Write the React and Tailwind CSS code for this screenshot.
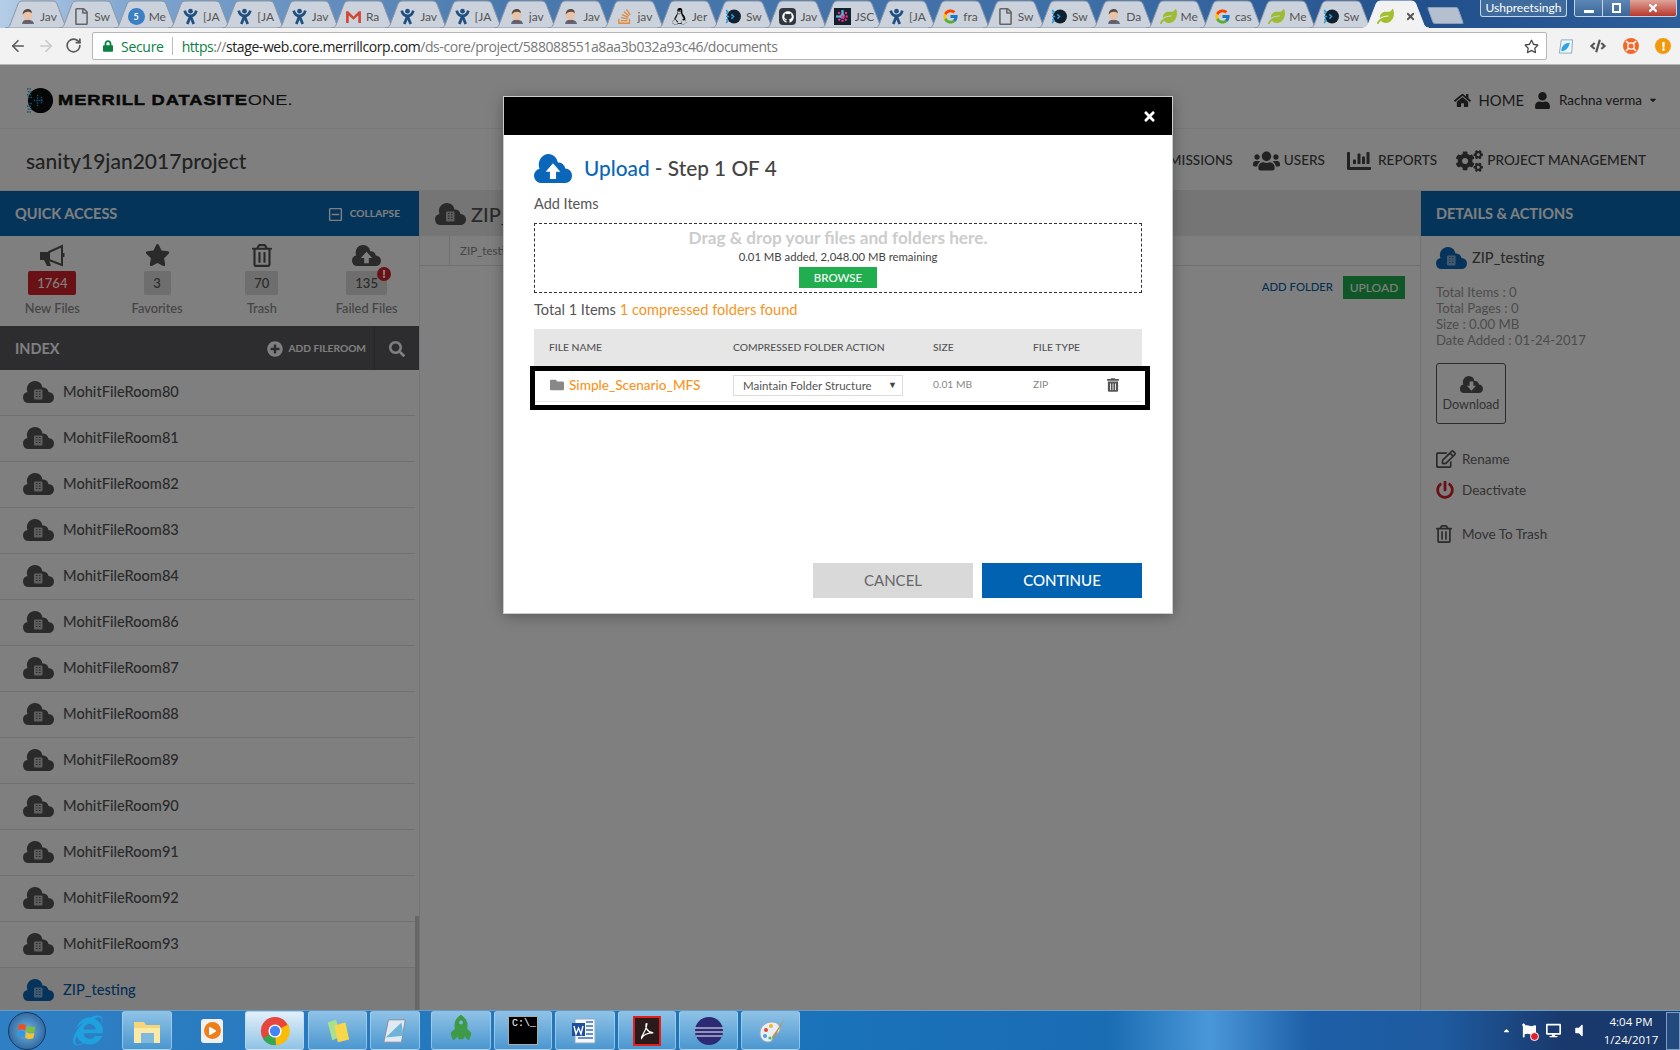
import React from "react";
import {
  FaHome, FaUser, FaUsers, FaCogs, FaStar, FaRegTrashAlt, FaFolder, FaTrashAlt,
  FaSearch, FaPlusCircle, FaRegEdit, FaPowerOff, FaChartBar,
  FaLock, FaRegStar, FaLinux, FaGithub, FaStackOverflow, FaRegFile, FaLeaf,
  FaCaretDown, FaInternetExplorer, FaPlay, FaRocket, FaTimes, FaRegMinusSquare, FaCaretUp, FaFlag, FaVolumeOff, FaDesktop, FaCode, FaExclamation
} from "react-icons/fa";
import { FcGoogle } from "react-icons/fc";
import { ArrowLeft, ArrowRight, RotateCw } from "lucide-react";

const tabs = [
  ["jenkins", "Jav"], ["doc", "Sw"], ["chat", "Me"], ["jira", "[JA"], ["jira", "[JA"], ["jira", "Jav"], ["gmail", "Ra"],
  ["jira", "Jav"], ["jira", "[JA"], ["jenkins", "jav"], ["jenkins", "Jav"], ["so", "jav"], ["linux", "Jer"], ["swagger", "Sw"],
  ["github", "Jav"], ["jsc", "JSC"], ["jira", "[JA"], ["google", "fra"], ["doc", "Sw"], ["swagger", "Sw"], ["jenkins", "Da"],
  ["leaf", "Me"], ["google", "cas"], ["leaf", "Me"], ["swagger", "Sw"],
];

function Fav({ type }) {
  const c = "w-[17px] h-[17px] shrink-0";
  if (type === "jenkins")
    return (
      <svg viewBox="0 0 16 16" className={c}>
        <path d="M3 15c0-3 2-4 5-4s6 1 6 4z" fill="#5b6a78" />
        <circle cx="8" cy="6.500" r="4.500" fill="#e8c3a8" />
        <path d="M3.500 6c0-4 3-5 5-5s4 1.500 3.500 4C10 3 6 3 3.500 6z" fill="#5a4a42" />
        <path d="M6 12l2 1 2-1v2l-2-1-2 1z" fill="#c62828" />
      </svg>
    );
  if (type === "doc") return <FaRegFile className={c + " text-[#666]"} />;
  if (type === "chat")
    return (
      <span className="w-[17px] h-[17px] shrink-0 rounded-full bg-[#3b7fc4] text-white text-[9px] leading-[17px] text-center font-bold">5</span>
    );
  if (type === "jira")
    return (
      <svg viewBox="0 0 16 16" className={c} fill="none" stroke="#205081" strokeWidth="2.600">
        <circle cx="8" cy="3" r="2.200" fill="#205081" stroke="none" />
        <path d="M2.500 2.500C3.500 6 5.500 7.500 8 7.500S12.500 6 13.500 2.500" />
        <path d="M8 7.500L5 15M8 7.500L11 15" />
      </svg>
    );
  if (type === "gmail")
    return (
      <svg viewBox="0 0 16 16" className={c}>
        <path d="M1 3h2l5 5 5-5h2v11h-2.500V7L8 11 3.500 7v7H1z" fill="#d14836" />
      </svg>
    );
  if (type === "so") return <FaStackOverflow className={c + " text-[#e08a3c]"} />;
  if (type === "linux") return <FaLinux className={c + " text-black"} />;
  if (type === "swagger")
    return (
      <svg viewBox="0 0 16 16" className={c}>
        <circle cx="8.500" cy="8" r="6.500" fill="#10202e" />
        <path d="M1 2l2 2M1 5h2M1 8h3M1 11h2M1 14l2-2M6 6l2 2-2 2" stroke="#2d9cdb" strokeWidth="1.500" fill="none" />
      </svg>
    );
  if (type === "github")
    return (
      <span className="w-[17px] h-[17px] shrink-0 rounded-sm bg-[#32383f] text-white flex items-center justify-center">
        <FaGithub className="w-3 h-3" />
      </span>
    );
  if (type === "jsc")
    return (
      <svg viewBox="0 0 16 16" className={c}>
        <rect width="16" height="16" fill="#14202c" />
        <path d="M8 2v12M2 8h12M4 4l8 8M12 4l-8 8" stroke="#ec3a8c" strokeWidth="2" strokeDasharray="2 1" />
        <path d="M8 2v5M2 8h5" stroke="#35c6e8" strokeWidth="2" />
      </svg>
    );
  if (type === "google") return <FcGoogle className={c} />;
  return <FaLeaf className={c + " text-[#9dbb35]"} />;
}

function TabShape({ fill, stroke }) {
  return (
    <svg viewBox="0 0 65 28" preserveAspectRatio="none" className="absolute inset-0 w-full h-full">
      <path d="M0 28 C3 28 4 27 5 25 L13 4 C14 2 15 1 18 1 L47 1 C50 1 51 2 52 4 L60 25 C61 27 62 28 65 28 Z" fill={fill} stroke={stroke} />
    </svg>
  );
}

function ChromeTabs() {
  return (
    <div className="h-[28px] flex items-stretch pl-[5px] bg-[linear-gradient(90deg,#b5cde6_0%,#7fa5cf_8%,#4a79ae_30%,#3e6ea6_65%,#21508c_85%,#2c5e9a_100%)] relative overflow-hidden">
      {tabs.map(([t, l], i) => (
        <div key={i} className="relative w-[65px] h-[28px] mr-[-10.700px] shrink-0">
          <TabShape fill="#ccd2db" stroke="#8797aa" />
          <div className="relative flex items-center gap-[4px] pl-[14px] pt-[5px] h-full">
            <Fav type={t} />
            <span className="text-[12px] text-[#555] w-[20px] overflow-hidden whitespace-nowrap">{l}</span>
          </div>
        </div>
      ))}
      <div className="relative w-[66px] h-[28px] shrink-0 z-10">
        <TabShape fill="#f2f2f2" stroke="#f2f2f2" />
        <div className="relative flex items-center pl-[14px] pt-[5px] h-full">
          <FaLeaf className="w-[17px] h-[17px] text-[#a3bf30]" />
          <FaTimes className="ml-[11px] w-[11px] h-[11px] text-[#555]" />
        </div>
      </div>
      <div className="relative w-[31px] h-[17px] mt-[7px] ml-[1px] shrink-0 bg-[#b4c0cf] skew-x-[20deg] rounded-[2px] border border-[#8aa0ba]" />
      <div className="ml-auto mr-[3px] flex items-start gap-[7px]">
        <div className="w-[87px] h-[17px] bg-[#3f6b9d] border border-[#c5d3e3] border-t-0 rounded-b-[3px] text-white text-[12px] leading-[16px] text-center whitespace-nowrap overflow-hidden">
          Ushpreetsingh
        </div>
        <div className="w-[103px] h-[17px] border border-[#c5d3e3] border-t-0 rounded-b-[3px] flex overflow-hidden text-white">
          <div className="w-[28px] border-r border-[#c5d3e3] bg-[linear-gradient(#5b86b5,#3b6698)] flex items-end justify-center pb-[3px]"><div className="w-[10px] h-[3px] bg-white" /></div>
          <div className="w-[27px] bg-[linear-gradient(#5b86b5,#3b6698)] flex items-center justify-center"><div className="w-[9px] h-[10px] border-2 border-white" /></div>
          <div className="flex-1 bg-[linear-gradient(#e0a49a,#b8372b)] flex items-center justify-center"><FaTimes className="w-[12px] h-[12px]" /></div>
        </div>
      </div>
    </div>
  );
}

function Toolbar() {
  return (
    <div className="h-[37px] bg-[#f2f2f2] flex items-center relative border-b border-[#b8b8b8]">
      <ArrowLeft strokeWidth={2.200} className="absolute left-[9px] top-[9px] w-[18px] h-[18px] text-[#5a5a5a]" />
      <ArrowRight strokeWidth={2.200} className="absolute left-[37px] top-[9px] w-[18px] h-[18px] text-[#c9c9c9]" />
      <RotateCw strokeWidth={2.400} className="absolute left-[65px] top-[9px] w-[17px] h-[17px] text-[#5a5a5a]" />
      <div className="ml-[92px] w-[1455px] h-[28px] bg-white border border-[#b5b5b5] rounded-[2px] flex items-center pl-[10px] text-[14px] font-['Open_Sans',sans-serif]">
        <FaLock className="w-[10px] h-[12px] text-[#0b8043]" />
        <span className="ml-[8px] text-[#0b8043] tracking-[-0.300px]">Secure</span>
        <span className="ml-[8px] w-px h-[18px] bg-[#bbb]" />
        <span className="ml-[9px] tracking-[-0.420px] whitespace-nowrap">
          <span className="text-[#0b8043]">https</span>
          <span className="text-[#777]">://</span>
          <span className="text-[#222]">stage-web.core.merrillcorp.com</span>
          <span className="text-[#777]">/ds-core/project/588088551a8aa3b032a93c46/documents</span>
        </span>
        <FaRegStar className="ml-auto mr-[7px] w-[15px] h-[15px] text-[#444]" />
      </div>
      <svg viewBox="0 0 16 18" className="ml-[11px] w-[16px] h-[17px]">
        <path d="M3 2h12l-1 14H1z" fill="#eef6fb" stroke="#8ab" />
        <path d="M3 14c0-6 4-9 9-9-1 5-4 9-9 9z" fill="#2ea4e0" />
      </svg>
      <FaCode className="ml-[16px] w-[16px] h-[16px] text-[#555]" />
      <svg viewBox="0 0 16 16" className="ml-[17px] w-[16px] h-[16px]">
        <circle cx="8" cy="8" r="8" fill="#f2682a" />
        <circle cx="8" cy="8" r="3.200" fill="#f2682a" stroke="#fff" strokeWidth="1.200" />
        <path d="M3 3l2.500 2.500M13 3l-2.500 2.500M3 13l2.500-2.500M13 13l-2.500-2.500" stroke="#fff" strokeWidth="1.600" />
      </svg>
      <div className="ml-[16px] w-[16px] h-[16px] rounded-full bg-[#f39a0c] flex items-center justify-center">
        <FaExclamation className="w-[9px] h-[9px] text-white" />
      </div>
    </div>
  );
}

const cloudPath = "M5.500 22A5.500 5.500 0 0 1 4.500 11.100A8 8 0 0 1 12 0A8 8 0 0 1 19.500 6.500A5.500 5.500 0 0 1 25.500 11A5.500 5.500 0 0 1 25.500 22Z";

function Cloud({ w, h, color, children }) {
  return (
    <svg viewBox="0 0 31 22" width={w} height={h} preserveAspectRatio="none" className="shrink-0" fill={color}>
      <path d={cloudPath} />
      {children}
    </svg>
  );
}

function BuildingCloud({ blue, w = 30 }) {
  const rect = blue ? "#8cb5da" : "#bcbcbc";
  const dot = blue ? "#0a66b8" : "#555";
  return (
    <Cloud w={w} h={Math.round((w * 22) / 31)} color={blue ? "#0a66b8" : "#555"}>
      <rect x="11" y="8.500" width="8.500" height="10" rx="1" fill={rect} />
      <path d="M13 10.500h1.500M16 10.500h1.500M13 13h1.500M16 13h1.500M13 15.500h1.500M16 15.500h1.500" stroke={dot} strokeWidth="1" />
    </Cloud>
  );
}

function UpCloud({ w, h, color }) {
  return (
    <Cloud w={w} h={h} color={color}>
      <path d="M15.500 7l6 6.500h-3.500V19h-5v-5.500H9.500z" fill="#fff" />
    </Cloud>
  );
}

function Header() {
  return (
    <>
      <div className="h-[64px] pt-[7px] flex items-center border-b border-[#f0f0f0] relative">
        <div className="ml-[25px] flex items-center">
          <svg viewBox="0 0 30 30" className="w-[29px] h-[29px]">
            <circle cx="16" cy="15" r="13" fill="#0c0c0c" />
            <path d="M2 3h4M3 6h4M2 9h5M3 12h5M9 15h10M3 18h5M2 21h5M3 24h4M2 27h4M13 9v12M17 11v8" stroke="#2b9fd0" strokeWidth="1.600" strokeDasharray="1.600 1" />
          </svg>
          <span className="ml-[4px] inline-block origin-left scale-x-[1.180] text-[15.500px] font-bold font-['Liberation_Sans',sans-serif] tracking-[0.800px] text-[#111] whitespace-nowrap [-webkit-text-stroke:0.500px_#111]">
            MERRILL DATASITE<span className="font-normal tracking-normal text-[#222] [-webkit-text-stroke:0px]">ONE.</span>
          </span>
        </div>
        <div className="ml-auto flex items-center text-[#333]">
          <FaHome className="w-[17px] h-[17px]" />
          <span className="ml-[8px] text-[14.800px]">HOME</span>
          <FaUser className="ml-[11px] w-[15px] h-[17px]" />
          <span className="ml-[9px] text-[13.500px]">Rachna verma</span>
          <FaCaretDown className="ml-[6px] mr-[22px] w-[10px] h-[10px]" />
        </div>
      </div>
      <div className="h-[62px] pt-[2px] flex items-center border-b border-[#ececec]">
        <span className="ml-[26px] text-[21px] font-medium text-[#444]">sanity19jan2017project</span>
        <div className="ml-auto mr-[34px] flex items-center text-[13.600px] font-medium text-[#444] whitespace-nowrap">
          <span>PERMISSIONS</span>
          <FaUsers className="ml-[20px] w-[27px] h-[24px]" />
          <span className="ml-[4px]">USERS</span>
          <FaChartBar className="ml-[20px] w-[28px] h-[24px]" />
          <span className="ml-[5px]">REPORTS</span>
          <FaCogs className="ml-[19px] w-[27px] h-[24px]" />
          <span className="ml-[4px]">PROJECT MANAGEMENT</span>
        </div>
      </div>
    </>
  );
}

const rooms = ["80", "81", "82", "83", "84", "86", "87", "88", "89", "90", "91", "92", "93"];

function QuickItem({ icon, count, label, red, alert }) {
  return (
    <div className="flex-1 flex flex-col items-center">
      <div className="h-[24px] flex items-center text-[#555]">{icon}</div>
      <div className={"relative mt-[4px] h-[24px] min-w-[27px] rounded-[2px] text-[13px] font-medium leading-[24px] text-center " + (red ? "px-[9px] bg-[#d2222a] text-white" : "px-[9px] bg-[#dcdcdc] text-[#555]")}>
        {count}
        {alert && (
          <span className="absolute right-[-4px] top-[-4px] w-[14px] h-[14px] rounded-full bg-[#d2222a] text-white flex items-center justify-center">
            <FaExclamation className="w-[8px] h-[8px]" />
          </span>
        )}
      </div>
      <div className="mt-[4px] text-[12.800px] font-medium text-[#888]">{label}</div>
    </div>
  );
}

function Sidebar() {
  return (
    <div className="w-[419px] shrink-0 flex flex-col relative">
      <div className="h-[45px] pt-[1px] bg-[#0a69b7] flex items-center px-[15px] text-white">
        <span className="text-[14.500px] font-bold">QUICK ACCESS</span>
        <FaRegMinusSquare className="ml-auto w-[15px] h-[15px]" />
        <span className="ml-[7px] mr-[4px] text-[10.200px] font-bold">COLLAPSE</span>
      </div>
      <div className="h-[90px] pt-[7px] flex">
        <QuickItem
          icon={
            <svg viewBox="0 0 27 23" className="w-[27px] h-[23px]">
              <path d="M1 8h9v8H1z" fill="#555" />
              <path d="M5 16h5l2 6H8z" fill="#555" />
              <path d="M10 8L23 2v19L10 16z" fill="none" stroke="#555" strokeWidth="2" />
              <path d="M23 9h2.500v4H23z" fill="#555" />
            </svg>
          }
          count="1764"
          label="New Files"
          red
        />
        <QuickItem icon={<FaStar className="w-[25px] h-[24px]" />} count="3" label="Favorites" />
        <QuickItem icon={<FaRegTrashAlt className="w-[20px] h-[23px]" />} count="70" label="Trash" />
        <QuickItem icon={<UpCloud w={29} h={21} color="#555" />} count="135" label="Failed Files" alert />
      </div>
      <div className="h-[44px] pt-[1px] bg-[#5a5a5e] flex items-center text-white">
        <span className="ml-[15px] text-[14.500px] font-bold">INDEX</span>
        <FaPlusCircle className="ml-auto w-[16px] h-[16px]" />
        <span className="ml-[5px] mr-[8px] text-[10.200px] font-bold">ADD FILEROOM</span>
        <span className="h-full w-px bg-[#4a4a52]" />
        <FaSearch className="mx-[14px] w-[16px] h-[16px]" />
      </div>
      <div className="flex-1 flex flex-col overflow-hidden">
        {rooms.map((r) => (
          <div key={r} className="h-[46px] shrink-0 mr-[4px] pb-[1px] border-b border-[#e2e2e2] flex items-center pl-[23px]">
            <BuildingCloud w={31} />
            <span className="ml-[9px] text-[14.600px] font-medium text-[#555]">MohitFileRoom{r}</span>
          </div>
        ))}
        <div className="h-[46px] shrink-0 mr-[4px] pb-[2px] bg-[#f6f6f6] flex items-center pl-[23px]">
          <BuildingCloud blue w={31} />
          <span className="ml-[9px] text-[14.600px] font-medium text-[#0a5ea8]">ZIP_testing</span>
        </div>
      </div>
      <div className="absolute right-0 top-[725px] bottom-0 w-[4px] bg-[#cfcfcf]" />
    </div>
  );
}

function Main() {
  return (
    <div className="flex-1 flex flex-col border-l border-[#e6e6e6]">
      <div className="h-[45px] bg-[#ebebeb] flex items-center pl-[15px]">
        <BuildingCloud w={31} />
        <span className="ml-[5px] whitespace-nowrap text-[20px] font-medium text-[#555]">ZIP_testing</span>
      </div>
      <div className="h-[30px] border-b border-[#e2e2e2] flex">
        <div className="w-[30px] border-r border-[#e2e2e2]" />
        <span className="ml-[10px] mt-[6px] whitespace-nowrap text-[11.500px] text-[#888]">ZIP_testing</span>
      </div>
      <div className="mt-[10px] flex items-center justify-end pr-[15px]">
        <span className="text-[11.300px] font-medium text-[#0a5ea8]">ADD FOLDER</span>
        <span className="ml-[10px] h-[23px] w-[62px] bg-[#20ae4e] text-white text-[12px] font-medium flex items-center justify-center">UPLOAD</span>
      </div>
    </div>
  );
}

function Details() {
  return (
    <div className="w-[260px] shrink-0 flex flex-col border-l border-[#e2e2e2]">
      <div className="h-[45px] pt-[1px] bg-[#0a69b7] flex items-center pl-[15px] text-white text-[14.500px] font-bold">DETAILS &amp; ACTIONS</div>
      <div className="pl-[15px] pt-[11px] flex flex-col">
        <div className="flex items-center h-[22px]">
          <BuildingCloud blue w={31} />
          <span className="ml-[5px] text-[14.500px] font-medium text-[#555]">ZIP_testing</span>
        </div>
        <div className="mt-[15px] text-[13.200px] leading-[16px] text-[#999]">
          <div>Total Items : 0</div>
          <div>Total Pages : 0</div>
          <div>Size : 0.00 MB</div>
          <div>Date Added : 01-24-2017</div>
        </div>
        <div className="mt-[15px] w-[70px] h-[61px] border border-[#555] rounded-[3px] flex flex-col items-center pt-[12px] text-[#666]">
          <Cloud w={23} h={17} color="#555">
            <path d="M15.500 19l-6-6.500h3.500V7h5v5.500h3.500z" fill="#fff" />
          </Cloud>
          <span className="mt-[3px] text-[12.600px]">Download</span>
        </div>
        <div className="mt-[25px] h-[20px] flex items-center text-[13.500px] text-[#666]">
          <FaRegEdit className="w-[20px] h-[20px] text-[#555]" />
          <span className="ml-[6px]">Rename</span>
        </div>
        <div className="mt-[11px] h-[20px] flex items-center text-[13.500px] text-[#666]">
          <FaPowerOff className="w-[18px] h-[18px] text-[#d2222a]" />
          <span className="ml-[8px]">Deactivate</span>
        </div>
        <div className="mt-[24px] h-[20px] flex items-center text-[13.500px] text-[#666]">
          <FaRegTrashAlt className="w-[16px] h-[18px] text-[#555]" />
          <span className="ml-[10px]">Move To Trash</span>
        </div>
      </div>
    </div>
  );
}

function Modal() {
  return (
    <div className="w-[668px] h-[516px] bg-white flex flex-col shadow-[0_0_0_1px_#ccc,0_2px_14px_rgba(0,0,0,0.35)]">
      <div className="h-[38px] bg-black flex items-center justify-end pr-[15px]">
        <FaTimes className="w-[15px] h-[15px] text-white" />
      </div>
      <div className="flex-1 px-[30px] flex flex-col relative">
        <div className="mt-[17px] h-[32px] flex items-center">
          <UpCloud w={38} h={29} color="#0a66b8" />
          <span className="ml-[12px] text-[20.800px] font-medium text-[#444] whitespace-nowrap">
            <span className="text-[#0a66b8]">Upload</span> - Step 1 OF 4
          </span>
        </div>
        <div className="mt-[9px] text-[14.500px] text-[#555]">Add Items</div>
        <div className="mt-[8px] h-[70px] border border-dashed border-[#333] flex flex-col items-center">
          <div className="mt-[2px] text-[17.200px] font-bold text-[#ccc] leading-[24px]">Drag &amp; drop your files and folders here.</div>
          <div className="text-[11.300px] text-[#444] leading-[14px]">0.01 MB added, 2,048.00 MB remaining</div>
          <div className="mt-[3px] w-[78px] h-[21px] bg-[#20ae4e] text-white text-[11.500px] font-medium flex items-center justify-center">BROWSE</div>
        </div>
        <div className="mt-[6px] text-[14.600px] text-[#555]">
          Total 1 Items <span className="text-[#f7941d]">1 compressed folders found</span>
        </div>
        <div className="mt-[8px] h-[39px] bg-[#e6e6e6] flex items-center text-[10.300px] font-medium text-[#555]">
          <span className="ml-[15px] w-[184px]">FILE NAME</span>
          <span className="w-[200px]">COMPRESSED FOLDER ACTION</span>
          <span className="w-[100px]">SIZE</span>
          <span>FILE TYPE</span>
        </div>
        <div className="h-[34px] pt-[2px] border-b border-[#e6e6e6] flex items-center text-[10.300px] text-[#888]">
          <FaFolder className="ml-[15px] w-[16px] h-[14px] text-[#888]" />
          <span className="ml-[4px] w-[164px] text-[13.600px] font-medium text-[#f7941d] whitespace-nowrap">Simple_Scenario_MFS</span>
          <div className="w-[170px] h-[21px] border border-[#ddd] flex items-center pl-[9px] pr-[5px] text-[11.500px] text-[#555]">
            Maintain Folder Structure
            <span className="ml-auto text-[9px] text-[#444]">▼</span>
          </div>
          <span className="ml-[30px] w-[100px]">0.01 MB</span>
          <span className="w-[74px]">ZIP</span>
          <FaTrashAlt className="w-[12px] h-[14px] text-[#555]" />
        </div>
        <div className="absolute left-[26px] right-[22px] top-[231px] h-[44px] border-[5px] border-black" />
        <div className="mt-auto mb-[15px] flex justify-end gap-[9px] text-[15px]">
          <div className="w-[160px] h-[35px] bg-[#d9d9d9] text-[#666] flex items-center justify-center">CANCEL</div>
          <div className="w-[160px] h-[35px] bg-[#0062b1] text-white font-medium flex items-center justify-center">CONTINUE</div>
        </div>
      </div>
    </div>
  );
}

function TaskBtn({ w, active, children }) {
  return (
    <div style={{ width: w }} className={"h-[39px] shrink-0 rounded-[3px] border border-[#b9d8ee]/60 flex items-center justify-center " + (active ? "bg-[linear-gradient(#e2f0fa,#8fc3e6)]" : "bg-[linear-gradient(#8ec2e6,#4b97d0)]")}>
      {children}
    </div>
  );
}

function Taskbar() {
  return (
    <div className="h-[40px] relative flex items-end border-t border-[#6d9ac0] bg-[linear-gradient(90deg,#2f7fc4_0%,#1a72b8_50%,#1a6cb3_66%,#4a97d8_72%,#1d5fa8_78%,#1e5a9e_86%,#19396c_93%,#19386b_100%)]">
      <div className="ml-[8px] w-[38px] h-[38px] rounded-full bg-[radial-gradient(circle,#6fb6e6,#1c4d86)] border border-[#143a66] flex items-center justify-center">
        <svg viewBox="0 0 24 24" className="w-[22px] h-[22px]">
          <path d="M3 5c3-1 5-1 8 1l-1 6c-3-2-5-2-8-1z" fill="#e8502a" />
          <path d="M12 6c3 2 5 2 9 1l-1 6c-4 1-6 1-9-1z" fill="#7cc03c" />
          <path d="M2 12c3-1 5-1 8 1l-1 6c-3-2-5-2-8-1z" fill="#2f9ae0" />
          <path d="M11 13c3 2 5 2 9 1l-1 6c-4 1-6 1-9-1z" fill="#f3c22f" />
        </svg>
      </div>
      <FaInternetExplorer className="ml-[27px] mb-[4px] w-[30px] h-[31px] text-[#1fa1e0]" />
      <div className="ml-[19px]">
        <TaskBtn w={50}>
          <svg viewBox="0 0 30 28" className="w-[30px] h-[28px]">
            <path d="M2 5h10l2 3h14v18H2z" fill="#f5d67a" />
            <path d="M2 11h26v15H2z" fill="#fbe9a8" />
            <rect x="9" y="16" width="13" height="10" fill="#7fb9dd" />
          </svg>
        </TaskBtn>
      </div>
      <div className="ml-[26px] mr-[19px] w-[28px] h-[39px] flex items-center justify-center">
        <span className="w-[22px] h-[24px] rounded-[3px] bg-[#f0f0f0] flex items-center justify-center">
          <span className="w-[17px] h-[17px] rounded-full bg-[#ee7d1c] flex items-center justify-center"><FaPlay className="w-[7px] h-[8px] text-white" /></span>
        </span>
      </div>
      <div className="flex gap-[3.500px]">
        <TaskBtn w={59} active>
          <svg viewBox="0 0 32 32" className="w-[30px] h-[30px]">
            <circle cx="16" cy="16" r="15" fill="#e8453c" />
            <path d="M16 16L3 24A15 15 0 0 0 17 31z" fill="#34a853" />
            <path d="M16 16l1 15A15 15 0 0 0 30 9z" fill="#fbbc05" />
            <circle cx="16" cy="16" r="7" fill="#fff" />
            <circle cx="16" cy="16" r="5.500" fill="#4285f4" />
          </svg>
        </TaskBtn>
        <TaskBtn w={59}>
          <svg viewBox="0 0 30 30" className="w-[28px] h-[28px]">
            <path d="M5 6l9-3 5 18-9 4z" fill="#a8e08f" />
            <path d="M12 9l12-3 4 18-12 3z" fill="#f8d74a" />
          </svg>
        </TaskBtn>
        <TaskBtn w={50}>
          <svg viewBox="0 0 30 30" className="w-[28px] h-[28px]">
            <path d="M8 3h18l-4 24H3z" fill="#dfeaf2" stroke="#889" />
            <path d="M5 22L22 6l2 14z" fill="#6fb4d8" />
          </svg>
        </TaskBtn>
      </div>
      <div className="ml-[11px] flex gap-[3px]">
        <TaskBtn w={60}><FaRocket className="w-[24px] h-[30px] text-[#3f9a48] -rotate-45" /></TaskBtn>
        <TaskBtn w={58}>
          <span className="w-[30px] h-[29px] bg-black border border-[#aaa] text-white text-[10px] leading-[14px] pl-[3px] font-['Liberation_Mono',monospace]">C:\_</span>
        </TaskBtn>
        <TaskBtn w={60}>
          <svg viewBox="0 0 30 30" className="w-[30px] h-[30px]">
            <path d="M5 3h20v24H5z" fill="#f4f7fb" stroke="#9ab" />
            <path d="M16 6h7M16 10h7M16 14h7M16 18h7M8 22h15" stroke="#3c6fb8" strokeWidth="1.500" />
            <path d="M2 7h13v13H2z" fill="#1e4f9c" />
            <path d="M4 10l2 8 2.500-6 2.500 6 2-8" stroke="#fff" strokeWidth="1.400" fill="none" />
          </svg>
        </TaskBtn>
        <TaskBtn w={58}>
          <span className="w-[28px] h-[30px] bg-[#2a1a1a] border-[2px] border-[#e0201c] flex items-center justify-center">
            <svg viewBox="0 0 20 20" className="w-[18px] h-[18px]" fill="none" stroke="#fff" strokeWidth="1.400">
              <path d="M9 2c-1 4 1 9 8 10-5 0-11 2-13 6-1-3 5-6 6-16z" />
            </svg>
          </span>
        </TaskBtn>
        <TaskBtn w={59}>
          <svg viewBox="0 0 30 30" className="w-[30px] h-[30px]">
            <circle cx="15" cy="15" r="14" fill="#2c2a73" />
            <path d="M1 12h28M1 16h28M2 20h26" stroke="#f5f5ff" strokeWidth="1" />
          </svg>
        </TaskBtn>
        <TaskBtn w={59}>
          <svg viewBox="0 0 30 30" className="w-[30px] h-[30px]">
            <path d="M4 17c0-7 6-11 12-11 5 0 8 3 8 7 0 5-6 4-7 7-1 3 0 6-5 6-5 0-8-4-8-9z" fill="#e9eef2" stroke="#9ab" />
            <circle cx="10" cy="14" r="2" fill="#e0483c" />
            <circle cx="15" cy="10" r="2" fill="#f0b52c" />
            <circle cx="9" cy="20" r="2" fill="#4c9fdc" />
            <circle cx="14" cy="22" r="1.600" fill="#5cb85c" />
            <path d="M29 2L18 22l-2-1z" fill="#c98a3e" />
          </svg>
        </TaskBtn>
      </div>
      <div className="ml-auto h-[39px] flex items-center text-white">
        <FaCaretUp className="w-[9px] h-[9px]" />
        <span className="relative ml-[11px]">
          <FaFlag className="w-[14px] h-[15px]" />
          <span className="absolute right-[-3px] bottom-[-3px] w-[9px] h-[9px] rounded-full bg-[#e0202c] border border-white" />
        </span>
        <FaDesktop className="ml-[10px] w-[15px] h-[15px]" />
        <FaVolumeOff className="ml-[14px] w-[8px] h-[15px]" />
        <div className="ml-[18px] w-[60px] text-center text-[11.500px] leading-[18px] font-['Open_Sans',sans-serif] whitespace-nowrap">
          <div>4:04 PM</div>
          <div>1/24/2017</div>
        </div>
        <div className="ml-[5px] w-[14px] h-[38px] border border-[#7f9fc0] bg-[#234a7e]" />
      </div>
    </div>
  );
}

export default function App() {
  return (
    <div className="w-[1680px] h-[1050px] overflow-hidden flex flex-col bg-white font-[Lato,sans-serif]">
      <ChromeTabs />
      <Toolbar />
      <div className="flex-1 min-h-0 relative flex flex-col overflow-hidden">
        <Header />
        <div className="flex-1 min-h-0 flex">
          <Sidebar />
          <Main />
          <Details />
        </div>
        <div className="absolute inset-0 bg-black/50 pl-[504px] pt-[32px]">
          <Modal />
        </div>
      </div>
      <Taskbar />
    </div>
  );
}
